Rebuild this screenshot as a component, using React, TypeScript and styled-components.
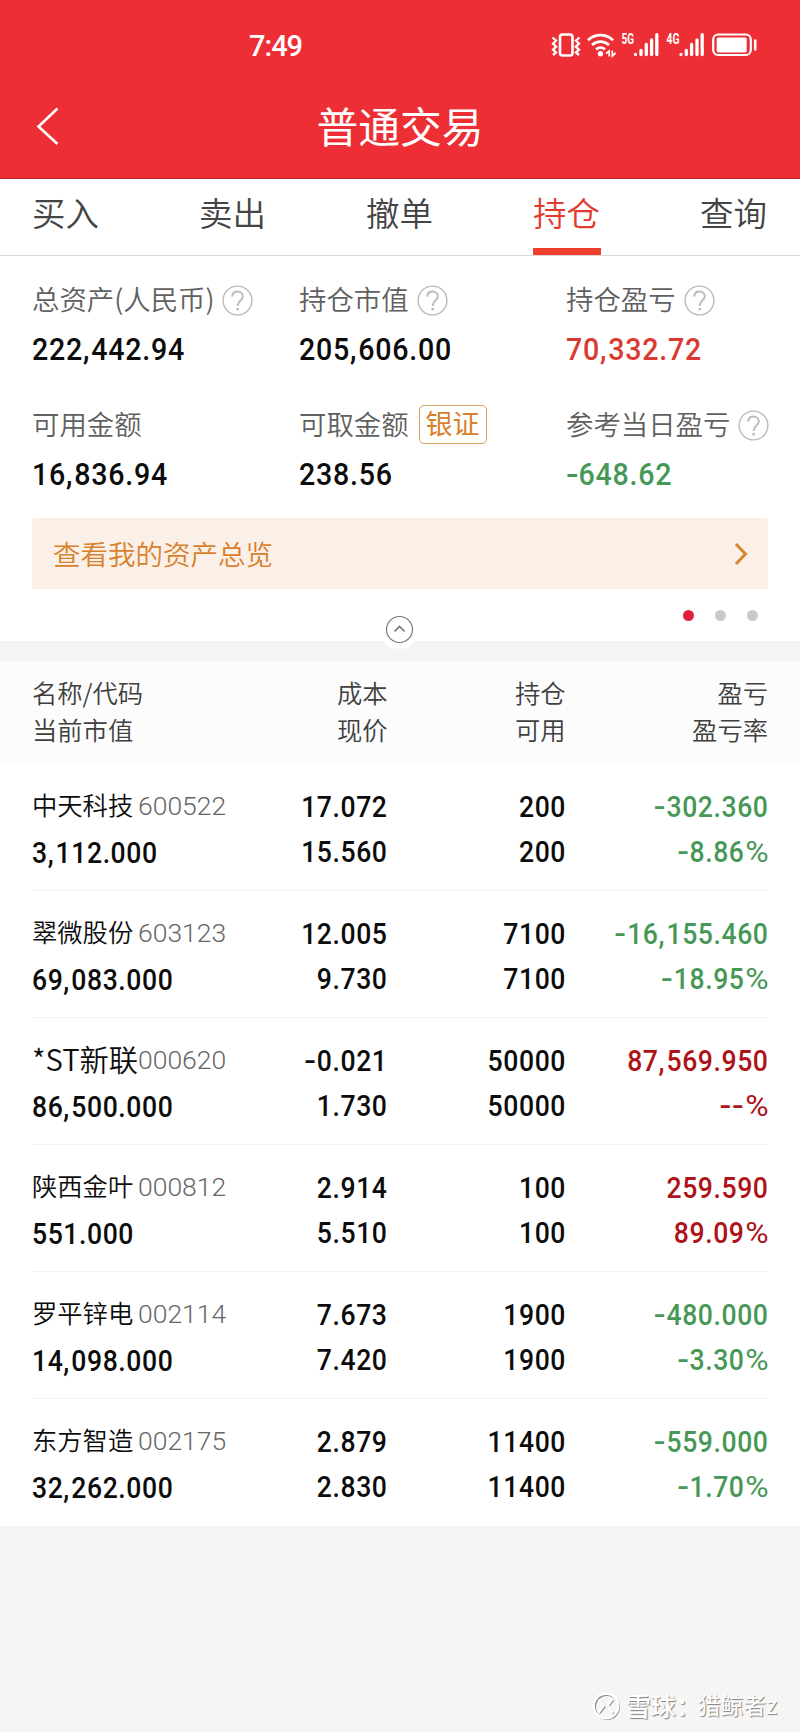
import React from "react";
import styled, { createGlobalStyle } from "styled-components";

const GlobalStyle = createGlobalStyle`
  * { box-sizing: border-box; }
  body {
    margin: 0;
    background: #f5f5f5;
    font-family: "Noto Sans CJK SC", "Noto Sans", sans-serif;
    font-weight: 350;
  }
`;

const RED = "#ed2e34";
const GREEN = "#479857";
const DARK_RED = "#ad1318";

const Screen = styled.main`
  width: 800px;
  height: 1732px;
  display: flex;
  flex-direction: column;
  overflow: hidden;
  background: #f5f5f5;
`;

const Header = styled.header`
  height: 179px;
  flex: none;
  background: ${RED};
  border-bottom: 1px solid #bf2529;
  color: #fff;
`;

const StatusBar = styled.div`
  height: 76px;
  padding: 17px 42px 0 249px;
  display: flex;
  justify-content: space-between;
  align-items: flex-start;
`;

const Clock = styled.span`
  font: 500 29px/58px Roboto, sans-serif;
  letter-spacing: -1px;
`;

const StatusIcons = styled.svg`
  display: block;
  margin-top: 14px;
`;

const TitleBar = styled.div`
  height: 102px;
  display: grid;
  grid-template-columns: 60px 1fr 60px;
  align-items: center;
  padding: 0 32px;
`;

const Title = styled.h1`
  margin: 0;
  padding-bottom: 4px;
  text-align: center;
  font-size: 41.8px;
  line-height: 60px;
  font-weight: 400;
`;

const Tabs = styled.nav`
  height: 77px;
  flex: none;
  padding: 0 32px;
  display: flex;
  justify-content: space-between;
  background: #fff;
  border-bottom: 1px solid #d9d9d9;
`;

const Tab = styled.div<{ $active?: boolean }>`
  width: 68px;
  height: 76px;
  padding-top: 9px;
  font-size: 33.5px;
  line-height: 48px;
  white-space: nowrap;
  color: ${(p) => (p.$active ? "#e23a30" : "#444")};
  border-bottom: ${(p) => (p.$active ? "7px solid #ef3f2f" : "none")};
`;

const Summary = styled.section`
  height: 385px;
  flex: none;
  background: #fff;
  padding: 20px 32px 0;
`;

const Metrics = styled.div`
  display: grid;
  grid-template-columns: 267px 267px 1fr;
  grid-auto-rows: 125px;
`;

const Metric = styled.div`
  display: flex;
  flex-direction: column;
`;

const MetricLabel = styled.div`
  height: 48px;
  display: flex;
  align-items: center;
  gap: 8px;
  font-size: 27.4px;
  line-height: 40px;
  color: #606060;
  white-space: nowrap;
`;

const LabelText = styled.span`
  padding-bottom: 4px;
`;

const BannerText = styled.span`
  padding-bottom: 2px;
`;

/* Digits are condensed horizontally and tracked out, in the manner of a DIN face. */
const Num = styled.span<{ $color?: string; $size?: number; $end?: boolean }>`
  display: block;
  font-family: Roboto, sans-serif;
  font-weight: 500;
  font-size: ${(p) => p.$size ?? 29.5}px;
  letter-spacing: ${(p) => (p.$size ? 0.8 : 0.65)}px;
  transform: scaleX(0.9);
  transform-origin: ${(p) => (p.$end ? "100% 50%" : "0 50%")};
  color: ${(p) => p.$color ?? "#0c0c0c"};
  white-space: nowrap;
`;

const MetricValue = styled.div`
  line-height: 50px;
`;

const BankTag = styled.span`
  height: 39px;
  padding: 0 6px;
  margin: 0 0 1px 2px;
  border: 1.5px solid #d6a15f;
  border-radius: 5px;
  font-size: 27px;
  line-height: 34px;
  font-weight: 400;
  color: #d8812d;
`;

const Banner = styled.div`
  height: 71px;
  margin-top: -8px;
  padding: 0 20px 0 21px;
  display: flex;
  align-items: center;
  justify-content: space-between;
  border-radius: 3px;
  background: #fbf0e8;
  color: #d8812d;
  font-size: 27.5px;
  line-height: 40px;
`;

const PagerRow = styled.div`
  height: 52px;
  display: grid;
  grid-template-columns: 1fr 60px 1fr;
`;

const Collapse = styled.div`
  grid-column: 2;
  position: relative;
  z-index: 1;
  padding-top: 24px;
  svg { display: block; }
`;

const Dots = styled.div`
  display: flex;
  justify-content: flex-end;
  gap: 21px;
  padding: 21px 10px 0 0;
`;

const Dot = styled.i<{ $on?: boolean }>`
  width: 11px;
  height: 11px;
  border-radius: 50%;
  background: ${(p) => (p.$on ? "#e0203f" : "#c9c9c9")};
`;

const Divider = styled.div`
  height: 21px;
  flex: none;
  background: #f4f4f4;
`;

const columns = `
  display: grid;
  grid-template-columns: 236px 119.5px 178px 1fr;
  padding: 0 32px;
`;

const TableHead = styled.div`
  ${columns}
  height: 102px;
  flex: none;
  padding-top: 12px;
  background: #fcfcfc;
  color: #404040;
  font-size: 25.3px;
  line-height: 37px;
`;

const HeadCell = styled.div<{ $right?: boolean }>`
  text-align: ${(p) => (p.$right ? "right" : "left")};
`;

const List = styled.section`
  flex: none;
  height: 762px;
  display: grid;
  grid-template-rows: repeat(6, 1fr);
  background: #fff;
`;

const Row = styled.article`
  ${columns}
  padding-top: 21px;
  background: linear-gradient(#f3f3f3, #f3f3f3) 32px 100% / 736px 1px no-repeat;
  &:last-child { background: none; }
`;

const Cell = styled.div<{ $right?: boolean }>`
  text-align: ${(p) => (p.$right ? "right" : "left")};
  line-height: 44.5px;
`;

const NameLine = styled.div`
  display: flex;
  align-items: center;
  height: 42px;
`;

const StockName = styled.span<{ $large?: boolean }>`
  width: 106px;
  padding-bottom: 4px;
  font-size: ${(p) => (p.$large ? 29.3 : 25.3)}px;
  color: #0c0c0c;
  white-space: nowrap;
`;

const Code = styled.span`
  font: 350 26.5px/42px Roboto, sans-serif;
  color: #666;
`;

const MarketValue = styled.div`
  line-height: 52px;
`;

const Comma = styled.span`
  letter-spacing: 2.2px;
`;

const Dash = styled.span`
  display: inline-block;
  width: 14px;
  letter-spacing: 0;
  text-align: left;
  transform: scaleX(1.3);
  transform-origin: 0 50%;
`;

const Percent = styled.span`
  display: inline-block;
  margin-left: 5px;
  font-weight: 400;
  letter-spacing: 0;
  transform: scaleX(1.2);
  transform-origin: 100% 50%;
`;

const Footer = styled.footer`
  flex: 1;
  display: flex;
  align-items: flex-end;
  justify-content: flex-end;
  padding: 0 23px 7px 0;
`;

const Watermark = styled.div`
  display: flex;
  align-items: center;
  color: #fff;
  font-size: 25px;
  line-height: 34px;
  font-weight: 500;
  text-shadow: 1px 1px 1px #808080;
`;

const Brand = styled.span`
  width: 72px;
  margin: 0 0 3px 4px;
  white-space: nowrap;
`;

const Author = styled.span`
  font-size: 22.8px;
  font-weight: 400;
  margin-bottom: 3px;
`;

function Figure({ text, ...rest }: { text: string; $color?: string; $size?: number; $end?: boolean }) {
  return (
    <Num {...rest}>
      {text.split("").map((c, i) => {
        if (c === ",") return <Comma key={i}>{c}</Comma>;
        if (c === "-") return <Dash key={i}>{c}</Dash>;
        if (c === "%") return <Percent key={i}>{c}</Percent>;
        return c;
      })}
    </Num>
  );
}

const Help = () => (
  <svg width="31" height="31" viewBox="0 0 31 31" fill="none" stroke="#bbb">
    <circle cx="15.5" cy="15.5" r="14.4" strokeWidth="1.4" />
    <path d="M10.2 11.6c.2-3.2 2.3-5 5.3-5s5.3 1.900 5.300 4.700c0 4.100-5 4.300-5 8.900v.8" strokeWidth="2" />
    <circle cx="15.7" cy="24.2" r="1.4" fill="#bbb" stroke="none" />
  </svg>
);

const Status = () => (
  <StatusIcons width="208" height="28" viewBox="550 31 208 28" fill="none" stroke="#fff">
    <rect x="560" y="34.500" width="12.500" height="21" rx="2.500" strokeWidth="2.600" />
    <path d="M552.500 37.500l3.500 3-3 3.200 3.200 3-3.200 3 3 2.800-3 2.500M579.500 37.500l-3.500 3 3 3.200-3.200 3 3.200 3-3 2.800 3 2.500" strokeWidth="2.300" />
    <path d="M588 40.200c7.300-6.700 17.700-6.700 25 0M592 45c5-4.400 12-4.400 17 0M596 49.400c3-2.300 6-2.300 9 0" strokeWidth="2.800" />
    <circle cx="600.500" cy="53.700" r="2.700" fill="#fff" stroke="none" />
    <path d="M606 53.500l3.200-2.500v5.500M612.300 50.500v5.500l3.300-3" strokeWidth="1.700" />
    <g fill="#fff" stroke="none" fontFamily="Roboto, sans-serif" fontSize="14.5" fontWeight="700">
      <text x="621.500" y="44" textLength="12.500" lengthAdjust="spacingAndGlyphs">5G</text>
      <text x="666.500" y="44" textLength="13" lengthAdjust="spacingAndGlyphs">4G</text>
    </g>
    <g strokeWidth="3.300" strokeLinecap="round">
      <path d="M635.500 54.400v.2M641 50.300v4.200M646.300 44.500v10M651.600 40v14.500M656.800 34.700v19.800" />
      <path d="M681 54.400v.2M686.300 50.300v4.200M691.600 44.500v10M697 40v14.500M702.200 34.700v19.800" />
    </g>
    <rect x="713.200" y="34.500" width="37.600" height="20.500" rx="5" strokeWidth="2.200" />
    <rect x="716.700" y="37.500" width="30" height="15" rx="1.500" fill="#fff" stroke="none" />
    <path d="M755.200 40.500v9" strokeWidth="2.600" strokeLinecap="round" />
  </StatusIcons>
);

type Holding = {
  name: string;
  code: string;
  value: string;
  cost: string;
  price: string;
  qty: string;
  profit: string;
  rate: string;
  up?: boolean;
};

const holdings: Holding[] = [
  { name: "中天科技", code: "600522", value: "3,112.000", cost: "17.072", price: "15.560", qty: "200", profit: "-302.360", rate: "-8.86%" },
  { name: "翠微股份", code: "603123", value: "69,083.000", cost: "12.005", price: "9.730", qty: "7100", profit: "-16,155.460", rate: "-18.95%" },
  { name: "*ST新联", code: "000620", value: "86,500.000", cost: "-0.021", price: "1.730", qty: "50000", profit: "87,569.950", rate: "--%", up: true },
  { name: "陕西金叶", code: "000812", value: "551.000", cost: "2.914", price: "5.510", qty: "100", profit: "259.590", rate: "89.09%", up: true },
  { name: "罗平锌电", code: "002114", value: "14,098.000", cost: "7.673", price: "7.420", qty: "1900", profit: "-480.000", rate: "-3.30%" },
  { name: "东方智造", code: "002175", value: "32,262.000", cost: "2.879", price: "2.830", qty: "11400", profit: "-559.000", rate: "-1.70%" },
];

const metrics = [
  { label: "总资产(人民币)", value: "222,442.94", help: true },
  { label: "持仓市值", value: "205,606.00", help: true },
  { label: "持仓盈亏", value: "70,332.72", help: true, color: "#d93a32" },
  { label: "可用金额", value: "16,836.94" },
  { label: "可取金额", value: "238.56", tag: "银证" },
  { label: "参考当日盈亏", value: "-648.62", help: true, color: GREEN },
];

export default function App() {
  return (
    <>
      <GlobalStyle />
      <Screen>
        <Header>
          <StatusBar>
            <Clock>7:49</Clock>
            <Status />
          </StatusBar>
          <TitleBar>
            <svg width="32" height="44" viewBox="0 0 32 44" fill="none" stroke="#fff" strokeWidth="2.600">
              <path d="M25.500 3.500L6.500 21.500l19 17.500" />
            </svg>
            <Title>普通交易</Title>
          </TitleBar>
        </Header>

        <Tabs>
          {["买入", "卖出", "撤单", "持仓", "查询"].map((t) => (
            <Tab key={t} $active={t === "持仓"}>{t}</Tab>
          ))}
        </Tabs>

        <Summary>
          <Metrics>
            {metrics.map((m) => (
              <Metric key={m.label}>
                <MetricLabel>
                  <LabelText>{m.label}</LabelText>
                  {m.help && <Help />}
                  {m.tag && <BankTag>{m.tag}</BankTag>}
                </MetricLabel>
                <MetricValue>
                  <Figure text={m.value} $size={31.8} $color={m.color} />
                </MetricValue>
              </Metric>
            ))}
          </Metrics>
          <Banner>
            <BannerText>查看我的资产总览</BannerText>
            <svg width="14" height="24" viewBox="0 0 14 24" fill="none" stroke="#d6852f" strokeWidth="3">
              <path d="M2 2l9.500 10L2 22" />
            </svg>
          </Banner>
          <PagerRow>
            <Collapse>
              <svg width="60" height="38" viewBox="0 0 60 38" fill="none">
                <path d="M12 27L21 35.500h17L47 27z" fill="#fff" />
                <circle cx="29.500" cy="16.500" r="13" stroke="#777" strokeWidth="1.200" fill="#fff" />
                <path d="M24.500 18.500l5-5 5 5" stroke="#777" strokeWidth="1.700" />
              </svg>
            </Collapse>
            <Dots>
              <Dot $on />
              <Dot />
              <Dot />
            </Dots>
          </PagerRow>
        </Summary>

        <Divider />

        <TableHead>
          <HeadCell>名称/代码<br />当前市值</HeadCell>
          <HeadCell $right>成本<br />现价</HeadCell>
          <HeadCell $right>持仓<br />可用</HeadCell>
          <HeadCell $right>盈亏<br />盈亏率</HeadCell>
        </TableHead>

        <List>
          {holdings.map((h) => (
            <Row key={h.code}>
              <Cell>
                <NameLine>
                  <StockName $large={h.name.startsWith("*")}>{h.name}</StockName>
                  <Code>{h.code}</Code>
                </NameLine>
                <MarketValue><Figure text={h.value} /></MarketValue>
              </Cell>
              <Cell $right>
                <Figure $end text={h.cost} />
                <Figure $end text={h.price} />
              </Cell>
              <Cell $right>
                <Figure $end text={h.qty} />
                <Figure $end text={h.qty} />
              </Cell>
              <Cell $right>
                <Figure $end text={h.profit} $color={h.up ? DARK_RED : GREEN} />
                <Figure $end text={h.rate} $color={h.up ? DARK_RED : GREEN} />
              </Cell>
            </Row>
          ))}
        </List>

        <Footer>
          <Watermark>
            <svg width="30" height="30" viewBox="0 0 30 30" fill="none">
              <g stroke="#888" transform="translate(1 1)" strokeWidth="2">
                <circle cx="14" cy="14" r="12" />
                <path d="M6.500 7.500l5 6.500-5 6.500M20.500 7l-5 6.500 5.500 7.500" />
              </g>
              <g stroke="#fff" strokeWidth="2.400">
                <circle cx="14" cy="14" r="12.300" />
                <path d="M6.500 7.500l5 6.500-5 6.500M20.500 7l-5 6.500 5.500 7.500" />
              </g>
            </svg>
            <Brand>雪球：</Brand>
            <Author>猎鲸者z</Author>
          </Watermark>
        </Footer>
      </Screen>
    </>
  );
}
